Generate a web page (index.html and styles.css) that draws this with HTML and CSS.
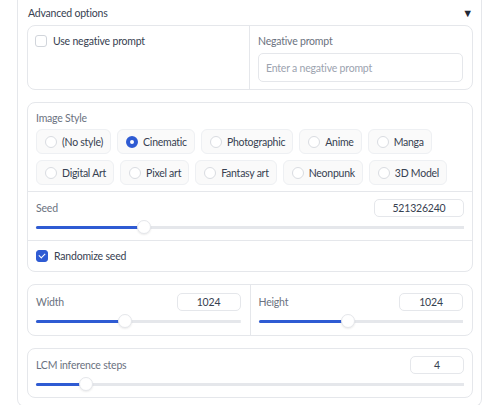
FILE: index.html
```html
<!DOCTYPE html>
<html lang="en">
<head>
  <meta charset="UTF-8">
  <title>Advanced options</title>
  <link rel="stylesheet" href="styles.css">
</head>
<body>

  <!-- Accordion -->
  <div class="accordion">
    <div class="acc-head">
      <span>Advanced options</span>
      <span class="caret">&#9660;</span>
    </div>

    <div class="acc-body">

      <!-- negative prompt -->
      <div class="block split">
        <div class="cell check-cell">
          <label class="check"><span class="box"></span>Use negative prompt</label>
        </div>
        <div class="cell">
          <div class="label">Negative prompt</div>
          <div class="textbox">Enter a negative prompt</div>
        </div>
      </div>

      <!-- style + seed -->
      <div class="block">
        <div class="section style-section">
          <div class="label">Image Style</div>
          <div class="radios">
            <label class="radio"><span class="dot"></span>(No style)</label>
            <label class="radio"><span class="dot on"></span>Cinematic</label>
            <label class="radio"><span class="dot"></span>Photographic</label>
            <label class="radio"><span class="dot"></span>Anime</label>
            <label class="radio"><span class="dot"></span>Manga</label>
            <label class="radio"><span class="dot"></span>Digital Art</label>
            <label class="radio"><span class="dot"></span>Pixel art</label>
            <label class="radio"><span class="dot"></span>Fantasy art</label>
            <label class="radio"><span class="dot"></span>Neonpunk</label>
            <label class="radio"><span class="dot"></span>3D Model</label>
          </div>
        </div>
        <div class="section slider-section">
          <div class="slider-head">
            <span class="label">Seed</span>
            <div class="num wide">521326240</div>
          </div>
          <div class="slider">
            <div class="fill" style="width: 25.3%"></div>
            <span class="thumb" style="left: 25.3%"></span>
          </div>
        </div>
        <div class="section check-section">
          <label class="check"><span class="box on"></span>Randomize seed</label>
        </div>
      </div>

      <!-- width / height -->
      <div class="block split">
        <div class="cell slider-section">
          <div class="slider-head">
            <span class="label">Width</span>
            <div class="num">1024</div>
          </div>
          <div class="slider">
            <div class="fill" style="width: 43.6%"></div>
            <span class="thumb" style="left: 43.6%"></span>
          </div>
        </div>
        <div class="cell slider-section">
          <div class="slider-head">
            <span class="label">Height</span>
            <div class="num">1024</div>
          </div>
          <div class="slider">
            <div class="fill" style="width: 43.6%"></div>
            <span class="thumb" style="left: 43.6%"></span>
          </div>
        </div>
      </div>

      <!-- steps -->
      <div class="block">
        <div class="section slider-section">
          <div class="slider-head">
            <span class="label">LCM inference steps</span>
            <div class="num small">4</div>
          </div>
          <div class="slider">
            <div class="fill" style="width: 11.7%"></div>
            <span class="thumb" style="left: 11.7%"></span>
          </div>
        </div>
      </div>

    </div>
  </div>

</body>
</html>
```

FILE: styles.css
```css
body {
  margin: 0;
  background-color: white;
  font-family: 'Lato', 'Liberation Sans', sans-serif;
  font-size: 10.5px;
  letter-spacing: -0.2px;
  color: #374151;
}

.accordion {
  margin: 0 17px;
  border: 1px solid #e5e7eb;
  border-top: none;
  border-radius: 0 0 8px 8px;
  padding: 0 8px 8px 9px;
}

.acc-head {
  height: 25px;
  display: flex;
  align-items: center;
  justify-content: space-between;
  padding: 0 0 0 1px;
  color: #374151;
}

.caret {
  font-size: 11px;
  color: #1f2937;
  margin-right: 0;
}

.acc-body {
  display: flex;
  flex-direction: column;
  gap: 12px;
}

.block {
  border: 1px solid #e5e7eb;
  border-radius: 8px;
  background-color: white;
}

.split {
  display: flex;
}

.split .cell {
  flex: 1;
  padding: 8px 9px 7px 8px;
}

.split .check-cell {
  padding-left: 7px;
}

.split .cell + .cell {
  border-left: 1px solid #e5e7eb;
}

.label {
  color: #6b7280;
  line-height: 14px;
}

.textbox {
  margin-top: 5px;
  height: 27px;
  border: 1px solid #e5e7eb;
  border-radius: 5px;
  padding: 0 7px;
  display: flex;
  align-items: center;
  color: #9ca3af;
}

.check {
  display: flex;
  align-items: center;
  gap: 6px;
  line-height: 14px;
  color: #374151;
}

.box {
  width: 10px;
  height: 10px;
  border: 1px solid #d1d5db;
  border-radius: 3px;
  background-color: white;
}

.box.on {
  background-color: #2f5bd3;
  border-color: #2f5bd3;
  position: relative;
}

.box.on::after {
  content: '';
  position: absolute;
  left: 3px;
  top: 1px;
  width: 3px;
  height: 5px;
  border: solid white;
  border-width: 0 1.5px 1.5px 0;
  transform: rotate(45deg);
}

.section {
  padding: 0 8px;
}

.section + .section {
  border-top: 1px solid #e5e7eb;
}

.style-section {
  padding-top: 8px;
  padding-bottom: 6px;
}

.radios {
  margin-top: 4px;
  display: flex;
  flex-wrap: wrap;
  gap: 6px;
}

.radio {
  height: 23px;
  display: flex;
  align-items: center;
  gap: 5px;
  padding: 0 7px 0 8px;
  border: 1px solid #eef0f3;
  border-radius: 6px;
  background-color: #fafafa;
  color: #374151;
  letter-spacing: -0.25px;
}

.dot {
  width: 10px;
  height: 10px;
  border: 1px solid #d9dce1;
  border-radius: 50%;
  background-color: white;
}

.dot.on {
  width: 4px;
  height: 4px;
  border: 4px solid #2f5bd3;
}

.slider-section {
  padding-top: 7px;
  padding-bottom: 6px;
}

.slider-head {
  display: flex;
  align-items: center;
  justify-content: space-between;
  height: 17px;
}

.num {
  width: 62px;
  height: 16px;
  border: 1px solid #e5e7eb;
  border-radius: 5px;
  text-align: center;
  line-height: 16px;
  color: #374151;
}

.num.wide {
  width: 88px;
}

.num.small {
  width: 52px;
}

.slider {
  position: relative;
  margin-top: 4px;
  height: 14px;
  display: flex;
  align-items: center;
  background: linear-gradient(#e5e7eb, #e5e7eb) center / 100% 3px no-repeat;
}

.fill {
  height: 3px;
  background-color: #2f5bd3;
  border-radius: 2px;
}

.thumb {
  position: absolute;
  top: 0;
  width: 12px;
  height: 12px;
  margin-left: -7px;
  border: 1px solid #e5e7eb;
  border-radius: 50%;
  background-color: white;
  box-shadow: 0 1px 2px rgba(0, 0, 0, 0.08);
}

.check-section {
  height: 30px;
  display: flex;
  align-items: center;
}
```
